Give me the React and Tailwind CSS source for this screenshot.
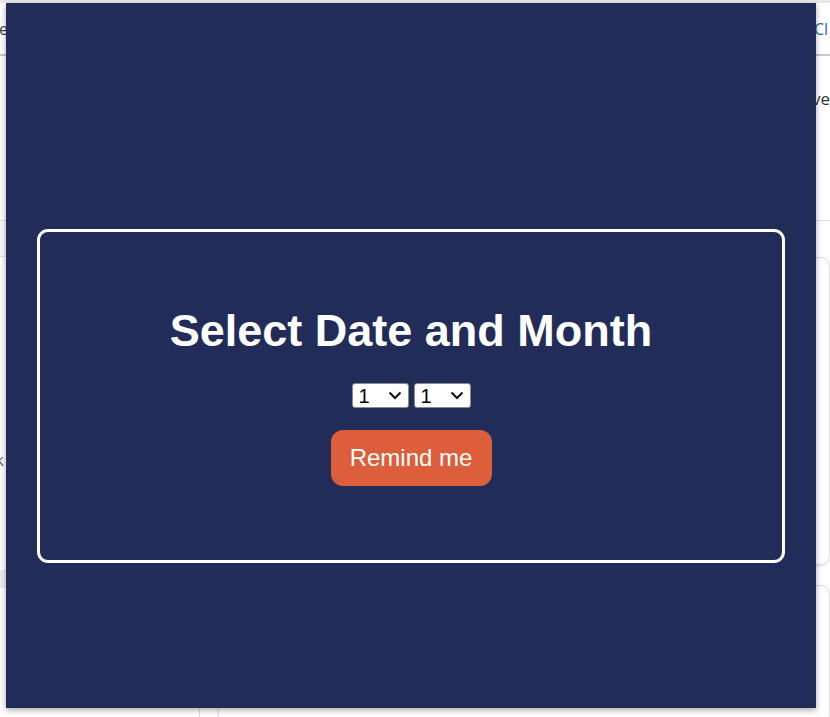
import { useState } from "react";

const days = Array.from({ length: 31 }, (_, i) => i + 1);
const months = Array.from({ length: 12 }, (_, i) => i + 1);

function BackgroundPage() {
  return (
    <div className="min-h-[717px] w-[830px] bg-white font-['Open_Sans',sans-serif] text-[#333]">
      <div className="h-[3px] bg-[#e8e8e8]"></div>
      <div className="flex h-[53px] items-center justify-between border-b-2 border-[#c9c9c9] px-0 text-[16px]">
        <span className="-ml-[1px] text-[#444]">e</span>
        <span className="pr-[2px] text-[#2a6f97]">Cl</span>
      </div>
      <div className="flex h-[165px] items-start justify-end border-b border-[#ddd] pt-[30px] text-[17px]">
        <span>ve</span>
      </div>
      <div className="flex">
        <div className="w-[200px] border-r border-[#ddd]">
          <div className="h-[36px] border-b border-[#e3e3e3] bg-[#fafafa]"></div>
          <div className="flex h-[313px] items-end pb-[98px] text-[17px] text-[#666]">
            <span className="-ml-[5px]">k</span>
          </div>
          <div className="h-[18px] bg-[#eeeeee]"></div>
        </div>
        <div className="flex flex-1 flex-col gap-[20px] pl-[18px] pt-[36px]">
          <div className="h-[308px] rounded-[10px] border border-[#e0e0e0] shadow-sm"></div>
          <div className="h-[140px] rounded-[10px] border border-[#e0e0e0] shadow-sm"></div>
        </div>
      </div>
    </div>
  );
}

function Picker({ value, onChange, options }) {
  return (
    <div className="relative h-[25px] w-[57px]">
      <select
        value={value}
        onChange={(e) => onChange(e.target.value)}
        className="h-full w-full appearance-none rounded-[3px] border border-[#8a8a8a] bg-white pl-[6px] text-[20px] leading-none text-black"
      >
        {options.map((o) => (
          <option key={o} value={o}>{o}</option>
        ))}
      </select>
      <svg
        className="pointer-events-none absolute right-[7px] top-[8px]"
        width="14"
        height="9"
        viewBox="0 0 14 9"
        fill="none"
      >
        <path d="M1.5 1.5 L7 7 L12.5 1.5" stroke="#111" strokeWidth="2" />
      </svg>
    </div>
  );
}

export default function App() {
  const [day, setDay] = useState(1);
  const [month, setMonth] = useState(1);

  return (
    <div className="relative h-[717px] w-[830px] overflow-hidden">
      <BackgroundPage />

      {/* modal overlay panel */}
      <div className="absolute left-[6px] top-[3px] h-[705px] w-[810px] bg-[#212c59] px-[31px] pt-[226px] font-['Liberation_Sans',Arial,sans-serif] shadow-[0_2px_6px_rgba(0,0,0,0.35)]">
        <div className="flex h-[334px] flex-col items-center rounded-[11px] border-[3px] border-white pt-[73px]">
          <h1 className="text-[45px] font-bold leading-[52px] text-white">Select Date and Month</h1>
          <div className="mt-[26px] flex gap-[5px]">
            <Picker value={day} onChange={setDay} options={days} />
            <Picker value={month} onChange={setMonth} options={months} />
          </div>
          <button className="mt-[22px] h-[56px] w-[161px] rounded-[12px] bg-[#dc5e3a] text-[24px] text-white">
            Remind me
          </button>
        </div>
      </div>
    </div>
  );
}
